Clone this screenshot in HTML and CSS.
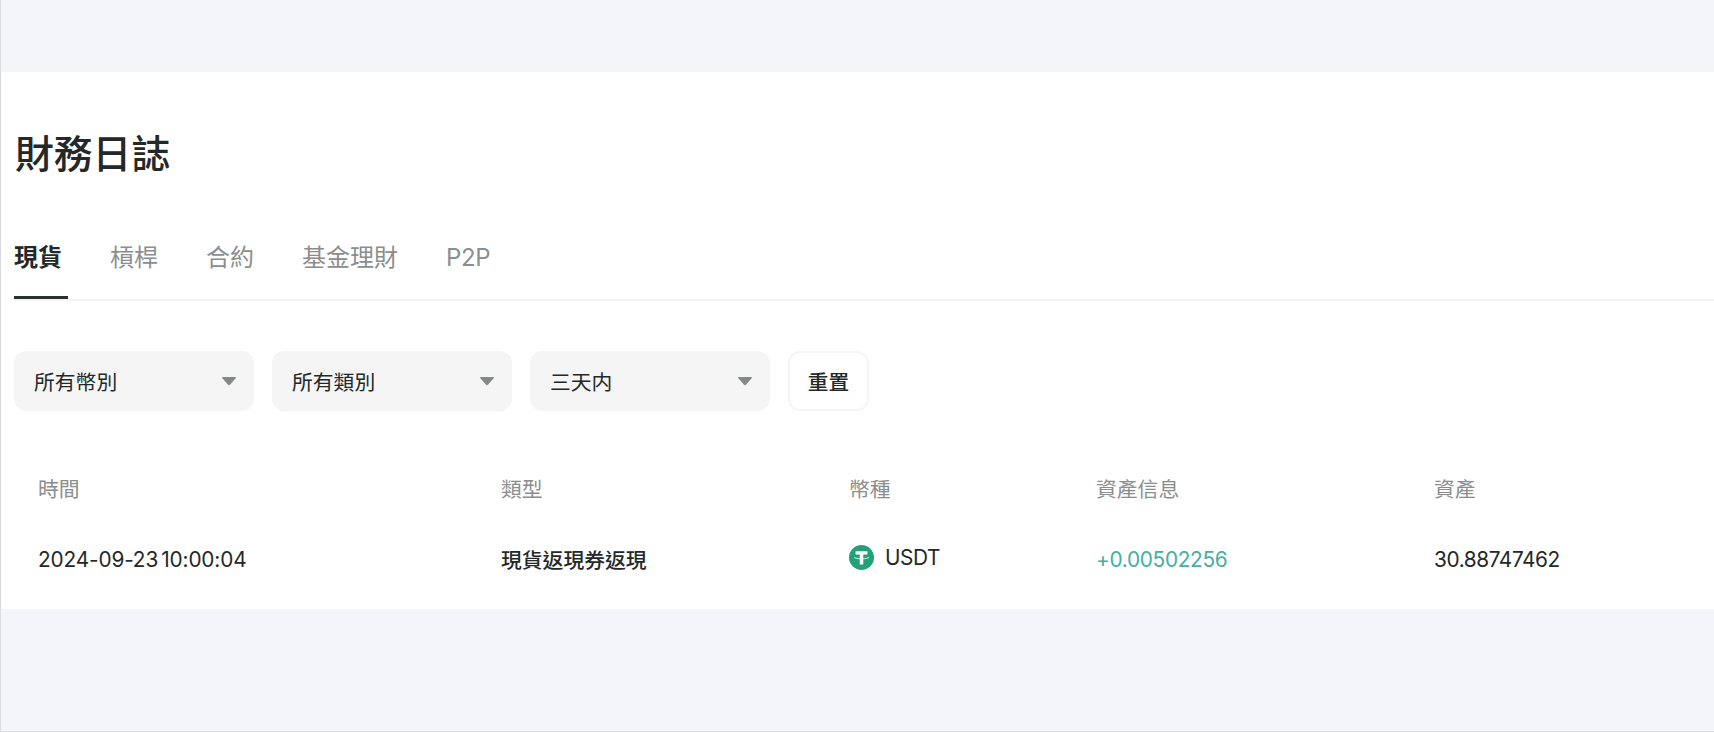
FILE: index.html
```html
<!DOCTYPE html>
<html lang="zh-TW">
<head>
    <meta charset="UTF-8">
    <meta name="viewport" content="width=device-width, initial-scale=1.0">
    <title>財務日誌</title>
    <link rel="stylesheet" href="styles.css">
</head>
<body>
    <main class="panel">
        <h1 class="title">財務日誌</h1>

        <nav class="tabs">
            <a class="tab active">現貨</a>
            <a class="tab">槓桿</a>
            <a class="tab">合約</a>
            <a class="tab">基金理財</a>
            <a class="tab p2p">P2P</a>
        </nav>

        <div class="filters">
            <div class="select">
                <span>所有幣別</span>
                <svg class="arrow" viewBox="0 0 14 9"><path d="M1 0h12q1.4 .2 .6 1.3L8.2 7.6q-1.2 1.2-2.4 0L.4 1.3Q-.4 .2 1 0z"/></svg>
            </div>
            <div class="select">
                <span>所有類別</span>
                <svg class="arrow" viewBox="0 0 14 9"><path d="M1 0h12q1.4 .2 .6 1.3L8.2 7.6q-1.2 1.2-2.4 0L.4 1.3Q-.4 .2 1 0z"/></svg>
            </div>
            <div class="select">
                <span>三天内</span>
                <svg class="arrow" viewBox="0 0 14 9"><path d="M1 0h12q1.4 .2 .6 1.3L8.2 7.6q-1.2 1.2-2.4 0L.4 1.3Q-.4 .2 1 0z"/></svg>
            </div>
            <button class="reset">重置</button>
        </div>

        <div class="table">
            <div class="row head">
                <span>時間</span>
                <span>類型</span>
                <span>幣種</span>
                <span>資產信息</span>
                <span>資產</span>
            </div>
            <div class="row">
                <span class="date">2024-09-23 10:00:04</span>
                <span class="type">現貨返現券返現</span>
                <span class="coin">
                    <svg class="coin-icon" viewBox="0 0 24 24">
                        <circle cx="12" cy="12" r="12" fill="#22a079"/>
                        <path d="M6.3 6h11.4v3h-4v9.8h-3.4V9h-4z" fill="#fff"/>
                        <path d="M4.8 11.6q.6 1.5 7.2 1.6 6.600-.1 7.200-1.600" fill="none" stroke="#fff" stroke-width=".8"/>
                    </svg>
                    <span class="coin-name">USDT</span>
                </span>
                <span class="change">+0.00502256</span>
                <span class="amount">30.88747462</span>
            </div>
        </div>
    </main>
</body>
</html>
```

FILE: styles.css
```css
* {
    margin: 0;
    padding: 0;
    box-sizing: border-box;
}
body {
    font-family: Inter, "Noto Sans CJK TC", sans-serif;
    height: 732px;
    padding-top: 72px;
    background-color: #f4f5f8;
    border-left: 1px solid #dadbdd;
    border-bottom: 1px solid #dadbdd;
    color: #232828;
    overflow: hidden;
}
.panel {
    height: 537px;
    padding: 53px 0 0 13px;
    background-color: #fff;
}
.title {
    padding-left: 1px;
    font-size: 38.8px;
    line-height: 58px;
    font-weight: 500;
}
.tabs {
    display: flex;
    gap: 48px;
    height: 74px;
    margin-top: 44px;
    border-bottom: 2px solid #f3f3f3;
}
.tab {
    height: 72px;
    font-size: 24px;
    line-height: 62px;
    white-space: nowrap;
    color: #8b8e8e;
}
.tab.active {
    width: 54px;
    margin-right: -6px;
    border-bottom: 3px solid #2a2f2f;
    font-weight: 700;
    color: #232828;
}
.tab.p2p {
    letter-spacing: -0.4px;
}
.filters {
    display: flex;
    gap: 18px;
    margin-top: 50px;
}
.select {
    display: flex;
    justify-content: space-between;
    align-items: center;
    width: 240px;
    height: 60px;
    padding: 0 18px 0 20px;
    border-radius: 12px;
    background-color: #f5f5f5;
    font-size: 20.8px;
}
.arrow {
    width: 14px;
    height: 9px;
    fill: #858888;
}
.reset {
    width: 81px;
    height: 60px;
    border: 2px solid #f5f5f5;
    border-radius: 12px;
    background-color: #fff;
    font-family: inherit;
    font-size: 20.7px;
    font-weight: 500;
    color: #232828;
}
.table {
    padding: 54px 0 0 24px;
    font-size: 20.8px;
}
.row {
    display: grid;
    grid-template-columns: 463px 348px 247px 338px 1fr;
    align-items: center;
    height: 70px;
}
.row.head {
    height: 46px;
    color: #8b8e8e;
}
.row.head + .row {
    margin-top: 13px;
}
.date {
    letter-spacing: -0.15px;
    word-spacing: -2.5px;
}
.type {
    font-weight: 500;
}
.coin {
    display: flex;
    align-items: center;
    gap: 11px;
    margin-top: -4px;
}
.coin-icon {
    width: 25px;
    height: 25px;
}
.coin-name {
    letter-spacing: -0.4px;
}
.change {
    letter-spacing: -0.3px;
    color: #43b0a1;
}
.amount {
    letter-spacing: -0.4px;
}
```
